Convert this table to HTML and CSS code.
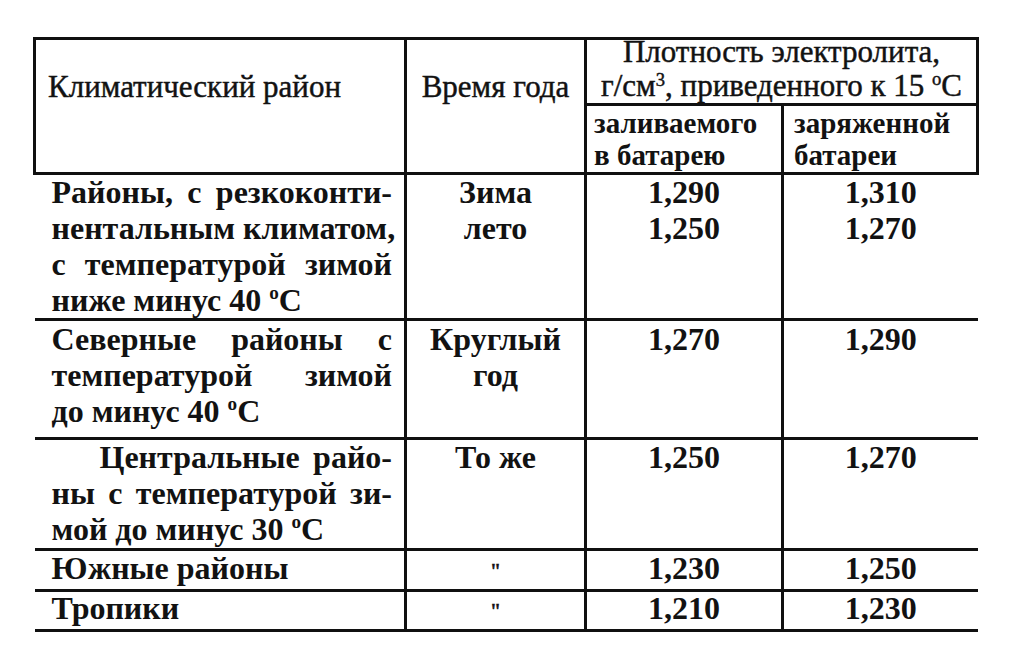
FILE: index.html
```html
<!DOCTYPE html>
<html lang="ru">
<head>
<meta charset="utf-8">
<title>Плотность электролита</title>
<link rel="stylesheet" href="styles.css">
</head>
<body>
<div class="page">
  <table class="tbl">
    <colgroup>
      <col class="c1"><col class="c2"><col class="c3"><col class="c4">
    </colgroup>
    <thead>
      <tr class="h1">
        <th rowspan="2" class="hd-left">Климатический район</th>
        <th rowspan="2" class="hd-season">Время года</th>
        <th colspan="2" class="hd-main"><div class="in">Плотность электролита,<br>г/см<sup class="sup">3</sup>, приведенного к 15 <span class="deg">о</span>С</div></th>
      </tr>
      <tr class="h2">
        <th class="hd-sub s1"><div class="in">заливаемого<br>в батарею</div></th>
        <th class="hd-sub s2"><div class="in">заряженной<br>батареи</div></th>
      </tr>
    </thead>
    <tbody>
      <tr class="r1">
        <td class="region"><div class="in">
          <span class="j">Районы, с резкоконти-</span>
          <span class="j">нентальным климатом,</span>
          <span class="j">с температурой зимой</span>
          <span class="l">ниже минус 40 <span class="deg">о</span>С</span>
        </div></td>
        <td class="season"><div class="in">Зима<br>лето</div></td>
        <td class="num"><div class="in">1,290<br>1,250</div></td>
        <td class="num last"><div class="in">1,310<br>1,270</div></td>
      </tr>
      <tr class="r2">
        <td class="region"><div class="in">
          <span class="j">Северные районы с</span>
          <span class="j">температурой зимой</span>
          <span class="l">до минус 40 <span class="deg">о</span>С</span>
        </div></td>
        <td class="season"><div class="in">Круглый<br>год</div></td>
        <td class="num"><div class="in">1,270</div></td>
        <td class="num last"><div class="in">1,290</div></td>
      </tr>
      <tr class="r3">
        <td class="region"><div class="in">
          <span class="j indent">Центральные райо-</span>
          <span class="j">ны с температурой зи-</span>
          <span class="l">мой до минус 30 <span class="deg">о</span>С</span>
        </div></td>
        <td class="season"><div class="in">То же</div></td>
        <td class="num"><div class="in">1,250</div></td>
        <td class="num last"><div class="in">1,270</div></td>
      </tr>
      <tr class="r4">
        <td class="region"><div class="in"><span class="l">Южные районы</span></div></td>
        <td class="season"><div class="in ditto">"</div></td>
        <td class="num"><div class="in">1,230</div></td>
        <td class="num last"><div class="in">1,250</div></td>
      </tr>
      <tr class="r5">
        <td class="region"><div class="in"><span class="l">Тропики</span></div></td>
        <td class="season"><div class="in ditto">"</div></td>
        <td class="num"><div class="in">1,210</div></td>
        <td class="num last"><div class="in">1,230</div></td>
      </tr>
    </tbody>
  </table>
</div>
</body>
</html>
```

FILE: styles.css
```css
html, body {
  margin: 0;
  padding: 0;
  background: #ffffff;
  font-family: "Liberation Serif", "Times New Roman", serif;
}

.page {
  padding: 37px 0 0 33px;
  width: 1024px;
  height: 662px;
  box-sizing: border-box;
  color: #121212;
  font-family: "Liberation Serif", "Times New Roman", serif;
}

.tbl {
  border-collapse: collapse;
  table-layout: fixed;
  width: 943px;
  font-family: "Liberation Serif", "Times New Roman", serif;
}

.c1 { width: 371px; }
.c2 { width: 180px; }
.c3 { width: 197px; }
.c4 { width: 195px; }

.tbl th,
.tbl td {
  border: 3px solid #101010;
  padding: 0;
  font-weight: normal;
  font-family: "Liberation Serif", "Times New Roman", serif;
  vertical-align: top;
}

/* ---------- header ---------- */
.h1 { height: 66px; }
.h2 { height: 69px; }

.tbl th {
  font-size: 31px;
  line-height: 31px;
  -webkit-text-stroke: 0.45px #121212;
}

.tbl .hd-left {
  text-align: left;
  padding: 31px 0 0 12px;
}

.tbl .hd-season {
  text-align: center;
  padding-top: 31px;
}

.tbl .hd-main {
  text-align: center;
  font-size: 31px;
  line-height: 34px;
}

.hd-main .in {
  margin: -5px 0 -8px;
}

.tbl .hd-sub {
  text-align: left;
  font-size: 29px;
  line-height: 32px;
  font-weight: bold;
  padding-top: 1px;
  -webkit-text-stroke: 0;
}

.hd-sub .in {
  margin-bottom: -6px;
}

.tbl .s1 { padding-left: 7px; }
.tbl .s2 { padding-left: 10px; }

.sup {
  font-size: 0.6em;
  line-height: 0;
  vertical-align: 0.55em;
}

.deg {
  font-size: 0.6em;
  line-height: 0;
  vertical-align: 0.6em;
}

/* ---------- body ---------- */
.tbl td {
  font-size: 32px;
  line-height: 36px;
  font-weight: bold;
}

.tbl td .in {
  margin: -1px 0 -8px;
}

.tbl tbody td.region { border-left: none; }
.tbl tbody td.last { border-right: none; }

.r1 { height: 146px; }
.r2 { height: 119px; }
.r3 { height: 111px; }
.r4 { height: 41px; }
.r5 { height: 40px; }

.r2 td .in { margin-top: 0; }
.r3 td .in { margin-top: -1px; }
.r4 td .in { margin-top: -1px; }
.r5 td .in { margin-top: -2px; }

.tbl td.region {
  padding: 0 12px 0 17px;
}

.region .j {
  display: block;
  white-space: nowrap;
  text-align: justify;
  text-align-last: justify;
}

.region .l {
  display: block;
  white-space: nowrap;
  text-align: left;
}

.region .indent {
  text-indent: 48px;
}

.tbl td.season,
.tbl td.num {
  text-align: center;
}

.tbl td .ditto {
  font-size: 22px;
  line-height: 26px;
  font-weight: normal;
  padding-top: 8px;
  -webkit-text-stroke: 0.6px #121212;
}
```
